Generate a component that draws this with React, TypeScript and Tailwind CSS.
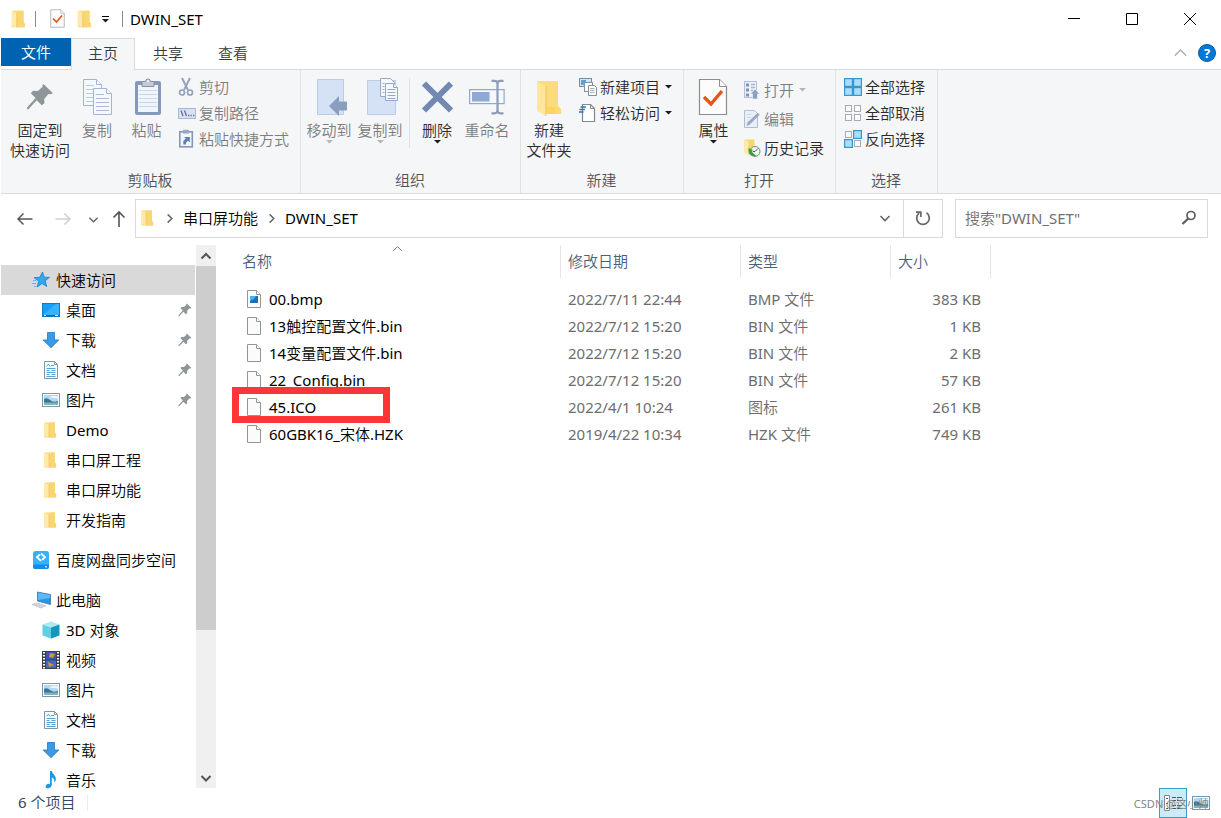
import React from "react";

type IconProps = { className?: string };

const FolderIcon = ({ className = "h-4 w-4" }: IconProps) => (
  <svg className={className} viewBox="0 0 16 16">
    <path d="M2.500.6h10.400v10.200l1.200 1.200v3.400H2.500z" fill="#fbd870" />
    <path d="M8 .6h4.900v10.200l1.200 1.200v3.400H8z" fill="#fad673" />
    <path d="M2.500.6 7 2.600v13L2.500 14z" fill="#ffe9ab" />
    <path d="M7 2.800v12.800" stroke="#f0c456" strokeWidth=".8" />
  </svg>
);

const BigFolderIcon = () => (
  <svg className="h-10 w-8" viewBox="0 0 32 40">
    <path d="M4 3h21v26l3 3v4H13L4 32z" fill="#fcd462" />
    <path d="M4 3h21v26H14V9z" fill="#fbdc7c" />
    <path d="M4 3l9 5v30l-9-5z" fill="#ffe69c" />
    <path d="M13 8v30" stroke="#f3c65a" />
    <path d="M22 36v-6l3-2 3 3v5z" fill="#fdd976" />
  </svg>
);

const CheckDoc = ({ className = "h-10 w-8" }: IconProps) => (
  <svg className={className} viewBox="0 0 32 40" fill="none">
    <path d="M1.500 1.500h20l7 7v28h-27z" fill="#fcfcfd" stroke="#8d8d8d" strokeWidth="1.200" />
    <path d="M21.500 1.500v7h7" fill="#fff" stroke="#8d8d8d" />
    <path d="M6 19l7 7 11-13" stroke="#e2571a" strokeWidth="3.400" />
  </svg>
);

const PinIcon = ({ className = "h-4 w-4" }: IconProps) => (
  <svg className={className} viewBox="0 0 28 28" fill="#8e9699">
    <path d="M17.500 1 27 10.200l-2.600 1-1.900-.3-4.300 5 .3 4.400-2.800 2-5-5L2.200 26.400.8 26l.5-1.800L9.600 15 4.800 10.200l2.300-2.400 4.700.2 4.800-4.200-.1-1.600z" />
  </svg>
);

const page = "#f5f8fd";
const CopyIcon = () => (
  <svg className="h-10 w-8" viewBox="0 0 32 40" fill={page} stroke="#a2b4d2">
    <path d="M2.500 1.500h13l5 5v21h-18z" />
    <path d="M15.500 1.500v5h5" />
    <path d="M5 7.500h8M5 11.500h11M5 15.500h7M5 19.500h7M5 23.500h7" stroke="#bccae0" />
    <path d="M12.500 10.500h13l5 5v21h-18z" />
    <path d="M25.500 10.500v5h5" />
    <path d="M15 16.500h8M15 20.500h13M15 24.500h13M15 28.500h13M15 32.500h13" stroke="#a9bad6" />
  </svg>
);

const PasteIcon = () => (
  <svg className="h-10 w-8" viewBox="0 0 32 40">
    <rect x="4" y="3" width="26" height="34" rx="2" fill="#8498ba" />
    <rect x="7" y="7" width="20" height="27" fill="#f0f4fb" />
    <path d="M8 12.500h18M8 16.500h18M8 20.500h18M8 24.500h18M8 28.500h18" stroke="#c9d6ea" />
    <path d="M11 3.500h3.500a2.500 2.500 0 0 1 5 0H23v5H11z" fill="#c3cbd8" stroke="#8791a3" />
    <circle cx="17" cy="3.300" r="1" fill="#fff" />
  </svg>
);

const ScissorsIcon = () => (
  <svg className="h-5 w-[18px]" viewBox="0 0 18 20" fill="none" stroke="#93a2bb">
    <path d="M4 1l6 12M12 1L6 13" strokeWidth="1.900" />
    <circle cx="4" cy="15.500" r="2.500" strokeWidth="1.700" />
    <circle cx="12" cy="15.500" r="2.500" strokeWidth="1.700" />
  </svg>
);

const CopyPathIcon = () => (
  <svg className="h-5 w-[18px]" viewBox="0 0 18 20" fill="none">
    <rect x=".5" y="5.500" width="17" height="10" fill="#d8e2f2" stroke="#a9b9d3" />
    <path d="M3 7.500l2 5.500M6.500 7.500l2 5.500" stroke="#5e7294" strokeWidth="1.300" />
    <path d="M10 12.500h1.300M12.500 12.500h1.300M15 12.500h1.300" stroke="#5e7294" strokeWidth="1.300" />
  </svg>
);

const PasteShortcutIcon = () => (
  <svg className="h-5 w-[18px]" viewBox="0 0 18 20" fill="none">
    <rect x="1.800" y="2.800" width="12.500" height="15" fill="#f3f6fb" stroke="#8497b8" strokeWidth="1.600" />
    <path d="M5 .8h6v3.800H5z" fill="#9aa9c2" />
    <path d="M5.300 15.500V12l2.500-2.500L6 8h5.800v5.500L10 11.800l-2 2v1.700z" fill="#5c80b8" />
  </svg>
);

const MoveToIcon = () => (
  <svg className="h-10 w-9" viewBox="0 0 36 40">
    <path d="M6.500 1.500h26v35h-26z" fill="#d5e2f5" stroke="#b9cce8" />
    <path d="M18 28l10-10v5.500h8v9h-8V38z" fill="#8a9fbe" />
  </svg>
);

const CopyToIcon = () => (
  <svg className="h-10 w-9" viewBox="0 0 36 40" fill={page}>
    <path d="M5.500 2.500h28v34h-28z" fill="#d5e2f5" stroke="#bacce8" />
    <g stroke="#94a8c8">
      <path d="M18.500.5h10l4 4v14h-14z" />
      <path d="M23.500 5.500h8l4 4v13h-12z" />
      <path d="M31.500 5.500v4h4M20.500 5.500h2M20.500 8.500h2M20.500 11.500h2M20.500 14.500h2M25.500 11.500h8M25.500 14.500h8M25.500 17.500h8M25.500 20.500h8" />
    </g>
  </svg>
);

const DeleteIcon = () => (
  <svg className="h-10 w-8" viewBox="0 0 32 40">
    <path d="M3 5.500l27 27M30 5.500l-27 27" stroke="#7288b0" strokeWidth="6" />
  </svg>
);

const RenameIcon = () => (
  <svg className="h-10 w-9" viewBox="0 0 36 40" fill="none">
    <rect x=".6" y="11.600" width="34.500" height="14" fill="#f4f7fc" stroke="#94a7c8" strokeWidth="1.200" />
    <rect x="3" y="14" width="17.500" height="9.500" fill="#90a9d2" />
    <path d="M22.500 2.800h3q3 0 3 3v26.500q0 3-3 3h-3M34.500 2.800h-3q-3 0-3 3v26.500q0 3 3 3h3" stroke="#8d9cb7" strokeWidth="2.200" />
  </svg>
);

const NewItemIcon = () => (
  <svg className="h-5 w-[18px]" viewBox="0 0 18 20" fill="#fff" stroke="#82909b">
    <rect x=".5" y="1.500" width="12" height="8" fill="#cfe6f7" stroke="#6d91ab" />
    <path d="M2 3h5v5H2z" fill="#5ba3d8" stroke="none" />
    <rect x="5.500" y="5.500" width="8" height="9" />
    <path d="M9.500 8.500h6l2 2v8h-8z" />
    <path d="M11 11.500h4.500M11 13.500h4.500M11 15.500h4.500" stroke="#a5adb5" />
  </svg>
);

const EasyAccessIcon = () => (
  <svg className="h-5 w-[18px]" viewBox="0 0 18 20" fill="none">
    <path d="M3.500 1.500h8l4 4v13h-12z" fill="#fff" stroke="#7f8991" strokeWidth="1.200" />
    <path d="M11.500 1.500v4h4" stroke="#7f8991" />
    <path d="M1.500 4h5.500M.5 6.500h5.500M0 9h4.500" stroke="#2878bd" strokeWidth="1.400" />
  </svg>
);

const OpenIcon = () => (
  <svg className="h-5 w-[18px]" viewBox="0 0 18 20" fill="none">
    <rect x="1.500" y="1.500" width="12" height="16" fill="#edf1f8" stroke="#b2bfd4" />
    <path d="M3 3.500h3v3H3zM3 8.500h3v3H3zM3 13.500h3v3H3z" fill="#7c94bb" />
    <path d="M8 4.500h4M8 7.500h4M8 10.500h2" stroke="#a7b7d1" strokeWidth="1.500" />
    <path d="M12 9l4.500 5h-2v5h-5v-5h-2z" fill="#8b9fbe" stroke="#f5f6f7" strokeWidth=".6" />
  </svg>
);

const EditIcon = () => (
  <svg className="h-5 w-[18px]" viewBox="0 0 18 20" fill="none">
    <path d="M1.500 1.500h10l3 3v14h-13z" fill="#e9eff8" stroke="#b1bfd5" />
    <path d="M3.500 17l1-3.500L14.800 3.700l1.900 2L6.500 15.800z" fill="#97a9c6" />
    <path d="M4 8.500h4M4 5.500h4" stroke="#cdd7e6" />
  </svg>
);

const HistoryIcon = () => (
  <svg className="h-5 w-[18px]" viewBox="0 0 18 20" fill="none">
    <path d="M1.500 1.500h10v13l-6 2.500-4-3z" fill="#f9d56d" />
    <path d="M1.500 1.500l4 2v14l-4-3z" fill="#ffeaa8" />
    <circle cx="12" cy="13.500" r="5" fill="#eef4ee" stroke="#7d8b86" />
    <path d="M12 13.500l3-3M12 13.500h-2" stroke="#47534e" />
    <path d="M5.500 10l4.500 2-1 1c.5 2 1.800 3.300 4.300 4.500-4 1.500-7.500-.5-7.800-4z" fill="#3f9d45" />
  </svg>
);

const SelectIcon = ({ on }: { on: boolean[] }) => (
  <svg className="h-5 w-[18px]" viewBox="0 0 18 20">
    {[[0, 1], [9, 1], [0, 10], [9, 10]].map(([x, y], i) =>
      on[i] ? (
        <rect key={i} x={x + 0.6} y={y + 0.6} width="7.800" height="7.800" fill="#a9ddfb" stroke="#3796cb" strokeWidth="1.200" />
      ) : (
        <rect key={i} x={x + 1.5} y={y + 1.5} width="6" height="6" fill="#fafbfc" stroke="#a7abb0" />
      )
    )}
  </svg>
);

const StarIcon = () => (
  <svg className="h-[18px] w-[18px]" viewBox="0 0 18 18">
    <path d="M10.500 1l1.700 5.200 5.300.2-4.300 3.300 1.500 5.800-4.600-3-5 3.500 1.600-5.700L2 6.600l5.700-.3z" fill="#35a6f2" stroke="#1f7fca" strokeWidth=".8" />
    <path d="M1 9.500h3M0 12.500h4M2 15.500h2" stroke="#65b6ea" />
  </svg>
);

const DesktopIcon = () => (
  <svg className="h-[18px] w-[18px]" viewBox="0 0 18 18">
    <rect x=".5" y="2.500" width="17" height="13" fill="#12a0fb" stroke="#1279c3" />
    <path d="M1 14L14 3h3v11z" fill="#37b2ff" />
    <path d="M1 14.500h16" stroke="#0b66a8" />
    <path d="M2 14.500h2M13 14.500h3" stroke="#d7efff" />
  </svg>
);

const DownloadIcon = () => (
  <svg className="h-[18px] w-[18px]" viewBox="0 0 18 18">
    <path d="M5.500 1.500h7v7.500h4.300L9 16.700 1.200 9h4.300z" fill="#3d98e6" stroke="#1e77c5" strokeWidth=".8" />
  </svg>
);

const DocumentIcon = () => (
  <svg className="h-[18px] w-[18px]" viewBox="0 0 18 18" fill="none">
    <path d="M2.500.5h10l3 3v14h-13z" fill="#f8fbfd" stroke="#7f95a3" />
    <path d="M12.500.5v3h3" stroke="#7f95a3" />
    <path d="M4.500 5.500L6.500 3l1.500 2.500M9 4.500h3M4.500 7.500h9M4.500 9.500h3M9.500 9.500h4M4.500 11.500h9M4.500 13.500h3M9.500 13.500h4M4.500 15.500h9" stroke="#3f9bd0" strokeWidth=".9" />
  </svg>
);

const PictureIcon = () => (
  <svg className="h-[18px] w-[18px]" viewBox="0 0 18 18">
    <rect x=".5" y="2.500" width="17" height="13" fill="#fff" stroke="#8494a0" />
    <rect x="2" y="4" width="14" height="10" fill="#aed9f4" />
    <path d="M2 8q3-2 6 1t8 1v2H2z" fill="#42729a" />
    <path d="M2 11.500h14V14H2z" fill="#7fb3bd" />
    <path d="M7 6.500q4-3 9-1v2z" fill="#edf7fd" />
  </svg>
);

const BaiduIcon = () => (
  <svg className="h-5 w-[18px]" viewBox="0 0 18 20" fill="none">
    <rect x="1" y="1" width="16" height="18" rx="2.500" fill="#36b2fa" />
    <path d="M1 14.500h16v2a2.500 2.500 0 0 1-2.500 2.500h-11A2.500 2.500 0 0 1 1 16.500z" fill="#158ae8" />
    <path d="M9 3.500l4 3.700-4 3.700-4-3.700z" stroke="#fff" strokeWidth="1.800" strokeDasharray="9.400 1.500" />
    <path d="M13 16.800h2" stroke="#fff" />
  </svg>
);

const ComputerIcon = () => (
  <svg className="h-[18px] w-5" viewBox="0 0 20 18">
    <path d="M5.500 1l13 2.500v10L5.500 10z" fill="#2496e8" stroke="#4a6f8e" strokeWidth=".8" />
    <path d="M6 1.500l12 2.400v3L6 9z" fill="#5bb9f7" />
    <path d="M0 13.500l5-1.500 9 2.800-5 2.200z" fill="#d0d6e2" stroke="#aeb6c5" strokeWidth=".6" />
  </svg>
);

const CubeIcon = () => (
  <svg className="h-[18px] w-[18px]" viewBox="0 0 18 18">
    <path d="M9 .5L17.500 3.500 9 6.500.5 3.500z" fill="#aee9f3" />
    <path d="M.5 3.500L9 6.500v11L.5 14.500z" fill="#5fd0e2" />
    <path d="M17.500 3.500L9 6.500v11l8.500-3z" fill="#1497bd" />
  </svg>
);

const VideoIcon = () => (
  <svg className="h-[18px] w-[18px]" viewBox="0 0 18 18">
    <path d="M0 0h18v18H0z" fill="#3a3d45" />
    <path d="M4 1h10v7.500H4z" fill="#3759b5" />
    <path d="M4 9.500h10V17H4z" fill="#4168c7" />
    <path d="M8 2l5 1-2 4-4-1zM6 11l6 3-5 2z" fill="#c69a45" />
    <path d="M2 1v17M16 1v17" stroke="#fff" strokeWidth="2" strokeDasharray="1.600 1.400" />
  </svg>
);

const MusicIcon = () => (
  <svg className="h-[18px] w-[18px]" viewBox="0 0 18 18">
    <path d="M8 0h1.800c.5 3 4.700 4.500 4 9-.4 1.400-1 2-1.500 2.400.6-3-1-4.500-2.500-5v7.400C9.500 16.500 7 17.800 5 17.300c-2-.6-1.800-3.300.5-4.200 1-.4 2-.3 2.500 0z" fill="#1f97e3" />
  </svg>
);

const FileIcon = ({ picture = false }: { picture?: boolean }) => (
  <svg className="h-[18px] w-[14px] shrink-0" viewBox="0 0 14 18" fill="none">
    <path d="M.5.5h9l4 4v13H.5z" fill="#fafbfb" stroke="#959595" />
    <path d="M9.500.5v4h4" fill="#fff" stroke="#959595" />
    {picture && <path d="M3 6h8v7H3z" fill="#1d6fb6" />}
    {picture && <path d="M3 6h6l-2 3-4 2z" fill="#4db0ea" />}
  </svg>
);

const Chevron = ({ d, color = "#666", size = "h-3 w-3", weight = 1.6 }: { d: "up" | "down" | "right"; color?: string; size?: string; weight?: number }) => (
  <svg className={size} viewBox="0 0 12 12" fill="none" stroke={color} strokeWidth={weight}>
    <path d={d === "up" ? "M1.500 8.500L6 4l4.500 4.500" : d === "down" ? "M1.500 4L6 8.500 10.500 4" : "M4 1.500L8.500 6 4 10.500"} />
  </svg>
);

const Caret = ({ color = "#1b1b1b" }: { color?: string }) => (
  <svg className="h-1 w-[7px]" viewBox="0 0 7 4">
    <path d="M0 0h7L3.500 3.500z" fill={color} />
  </svg>
);

function BigButton({ icon, lines, width, disabled, caret }: { icon: React.ReactNode; lines: string[]; width: string; disabled?: boolean; caret?: boolean }) {
  return (
    <button disabled={disabled} className={`flex flex-col items-center self-start leading-5 ${width} ${disabled ? "text-[#7b7d80]" : "text-[#2b2b2b]"}`}>
      <span className="flex h-[42px] items-start justify-center">{icon}</span>
      {lines.map((l) => (
        <span key={l} className="whitespace-nowrap">{l}</span>
      ))}
      {caret && <Caret color={disabled ? "#b5b5b5" : "#1b1b1b"} />}
    </button>
  );
}

function SmallButton({ icon, label, disabled, caret, height = "h-[26px]" }: { icon: React.ReactNode; label: string; disabled?: boolean; caret?: boolean; height?: string }) {
  return (
    <button disabled={disabled} className={`flex items-center whitespace-nowrap ${height} ${disabled ? "text-[#7b7d80]" : "text-[#2b2b2b]"}`}>
      <span className="mr-[3px]">{icon}</span>
      {label}
      {caret && <span className="ml-[5px]"><Caret color={disabled ? "#b5b5b5" : "#1b1b1b"} /></span>}
    </button>
  );
}

function Group({ label, width, children }: { label: string; width: string; children: React.ReactNode }) {
  return (
    <section aria-label={label} className={`flex shrink-0 flex-col border-r border-[#e2e3e4] ${width}`}>
      <div className="flex flex-1 pt-2">{children}</div>
      <div className="h-6 pr-px text-center leading-[22px] text-[#505356]">{label}</div>
    </section>
  );
}

const quick = [
  { label: "桌面", icon: <DesktopIcon />, pinned: true },
  { label: "下载", icon: <DownloadIcon />, pinned: true },
  { label: "文档", icon: <DocumentIcon />, pinned: true },
  { label: "图片", icon: <PictureIcon />, pinned: true },
  { label: "Demo", icon: <FolderIcon /> },
  { label: "串口屏工程", icon: <FolderIcon /> },
  { label: "串口屏功能", icon: <FolderIcon /> },
  { label: "开发指南", icon: <FolderIcon /> },
];

const computer = [
  { label: "3D 对象", icon: <CubeIcon /> },
  { label: "视频", icon: <VideoIcon /> },
  { label: "图片", icon: <PictureIcon /> },
  { label: "文档", icon: <DocumentIcon /> },
  { label: "下载", icon: <DownloadIcon /> },
  { label: "音乐", icon: <MusicIcon /> },
];

const files = [
  { name: "00.bmp", date: "2022/7/11 22:44", type: "BMP 文件", size: "383 KB", picture: true },
  { name: "13触控配置文件.bin", date: "2022/7/12 15:20", type: "BIN 文件", size: "1 KB" },
  { name: "14变量配置文件.bin", date: "2022/7/12 15:20", type: "BIN 文件", size: "2 KB" },
  { name: "22_Config.bin", date: "2022/7/12 15:20", type: "BIN 文件", size: "57 KB" },
  { name: "45.ICO", date: "2022/4/1 10:24", type: "图标", size: "261 KB", marked: true },
  { name: "60GBK16_宋体.HZK", date: "2019/4/22 10:34", type: "HZK 文件", size: "749 KB" },
];

function TreeRow({ icon, label, root, selected, pinned }: { icon: React.ReactNode; label: string; root?: boolean; selected?: boolean; pinned?: boolean }) {
  return (
    <li>
      <a href="#" className={`flex h-[30px] items-center pr-[3px] text-black ${root ? "pl-[31px]" : "pl-[41px]"} ${selected ? "bg-[#d9d9d9]" : ""}`}>
        <span className={`flex ${root ? "mr-1 w-5" : "mr-[6px] w-[18px]"}`}>{icon}</span>
        <span className="flex-1 whitespace-nowrap">{label}</span>
        {pinned && <PinIcon className="h-[14px] w-[14px]" />}
      </a>
    </li>
  );
}

export default function App() {
  return (
    <div className="flex h-screen flex-col overflow-hidden bg-white pl-px font-['Noto_Sans','Noto_Sans_CJK_SC_DemiLight','Noto_Sans_CJK_SC',sans-serif] text-[15px] leading-5 text-black">
      <header className="flex h-[38px] shrink-0 items-center">
        <div className="flex flex-1 items-center pl-2">
          <FolderIcon className="h-[18px] w-[18px]" />
          <span className="ml-2 h-4 w-px bg-[#8c8c8c]" />
          <button aria-label="属性" className="ml-[14px]"><CheckDoc className="h-5 w-4" /></button>
          <button aria-label="新建文件夹" className="ml-[9px]"><FolderIcon className="h-[18px] w-[18px]" /></button>
          <button aria-label="自定义快速访问工具栏" className="ml-[9px] flex flex-col items-center gap-0.5">
            <span className="h-px w-[7px] bg-black" />
            <Caret />
          </button>
          <span className="ml-[13px] h-4 w-px bg-[#8c8c8c]" />
          <h1 className="ml-[7px]">DWIN_SET</h1>
        </div>
        <div className="flex items-center gap-[46px] pr-[25px]">
          <button aria-label="最小化"><svg className="h-3 w-3" viewBox="0 0 12 12"><path d="M0 5.500h12" stroke="#000" /></svg></button>
          <button aria-label="最大化"><svg className="h-3 w-3" viewBox="0 0 12 12"><path d="M.5.5h11v11H.5z" fill="none" stroke="#000" /></svg></button>
          <button aria-label="关闭"><svg className="h-3 w-3" viewBox="0 0 12 12"><path d="M0 0l12 12M12 0L0 12" stroke="#000" /></svg></button>
        </div>
      </header>

      <nav className="flex h-8 shrink-0 border-b border-[#dadbdc] text-[#3b3b3b]">
        <button className="h-7 w-[70px] bg-[#0063b1] text-white">文件</button>
        <button className="z-10 -mb-px w-16 border border-b-0 border-[#dadbdc] bg-[#f5f6f7] pb-1">主页</button>
        <button className="w-[66px] pb-0.5">共享</button>
        <button className="w-16 pb-0.5">查看</button>
        <div className="flex flex-1 items-center justify-end gap-[10px] pr-[5px] pb-0.5">
          <button aria-label="折叠功能区"><Chevron d="up" color="#b2b2b2" size="h-[15px] w-[15px]" weight={1.2} /></button>
          <button className="h-[18px] w-[18px] rounded-full border border-[#005ba8] bg-[#0078d7] text-[13px] leading-4 font-bold text-white">?</button>
        </div>
      </nav>

      <div className="flex h-[124px] shrink-0 border-b border-[#dadbdc] bg-[#f5f6f7]">
        <Group label="剪贴板" width="w-[300px]">
          <BigButton icon={<span className="pt-[5px]"><PinIcon className="h-7 w-7" /></span>} lines={["固定到", "快速访问"]} width="w-[78px]" />
          <BigButton icon={<CopyIcon />} lines={["复制"]} width="w-9" disabled />
          <BigButton icon={<PasteIcon />} lines={["粘贴"]} width="w-[63px]" disabled />
          <div className="-mt-1">
            <SmallButton icon={<ScissorsIcon />} label="剪切" disabled />
            <SmallButton icon={<CopyPathIcon />} label="复制路径" disabled />
            <SmallButton icon={<PasteShortcutIcon />} label="粘贴快捷方式" disabled />
          </div>
        </Group>
        <Group label="组织" width="w-[220px]">
          <BigButton icon={<MoveToIcon />} lines={["移动到"]} width="w-14" disabled caret />
          <BigButton icon={<CopyToIcon />} lines={["复制到"]} width="w-[46px]" disabled caret />
          <span className="ml-[6px] h-[70px] w-px bg-[#e2e3e4]" />
          <BigButton icon={<DeleteIcon />} lines={["删除"]} width="w-[54px]" caret />
          <BigButton icon={<RenameIcon />} lines={["重命名"]} width="w-[46px]" disabled />
        </Group>
        <Group label="新建" width="w-[163px]">
          <BigButton icon={<BigFolderIcon />} lines={["新建", "文件夹"]} width="w-14" />
          <div className="-mt-1 pl-0.5">
            <SmallButton icon={<NewItemIcon />} label="新建项目" caret />
            <SmallButton icon={<EasyAccessIcon />} label="轻松访问" caret />
          </div>
        </Group>
        <Group label="打开" width="w-[152px]">
          <BigButton icon={<CheckDoc />} lines={["属性"]} width="w-[59px]" caret />
          <div className="-mt-[3px]">
            <SmallButton height="h-[29px]" icon={<OpenIcon />} label="打开" disabled caret />
            <SmallButton height="h-[29px]" icon={<EditIcon />} label="编辑" disabled />
            <SmallButton height="h-[29px]" icon={<HistoryIcon />} label="历史记录" />
          </div>
        </Group>
        <Group label="选择" width="w-[102px]">
          <div className="-mt-1 pl-2">
            <SmallButton icon={<SelectIcon on={[true, true, true, true]} />} label="全部选择" />
            <SmallButton icon={<SelectIcon on={[false, false, false, false]} />} label="全部取消" />
            <SmallButton icon={<SelectIcon on={[false, true, true, false]} />} label="反向选择" />
          </div>
        </Group>
      </div>

      <div className="flex h-[51px] shrink-0 items-center pr-[13px] pb-[3px]">
        <div className="flex w-[134px] items-center pt-0.5 pl-4">
          <button aria-label="后退"><svg className="h-4 w-4" viewBox="0 0 16 16" fill="none" stroke="#555" strokeWidth="1.500"><path d="M15.500 8H1M6.500 2.500L1 8l5.500 5.500" /></svg></button>
          <button aria-label="前进" disabled className="ml-[22px]"><svg className="h-4 w-4" viewBox="0 0 16 16" fill="none" stroke="#cfcfcf" strokeWidth="1.500"><path d="M.5 8H15M9.500 2.500L15 8l-5.500 5.500" /></svg></button>
          <button aria-label="最近位置" className="ml-[17px]"><Chevron d="down" size="h-[11px] w-[11px]" /></button>
          <button aria-label="上移" className="ml-3"><svg className="h-[18px] w-4" viewBox="0 0 16 18" fill="none" stroke="#555" strokeWidth="1.600"><path d="M8 17V2M2.500 7.500L8 2l5.500 5.500" /></svg></button>
        </div>
        <div className="flex h-[39px] flex-1 items-center border border-[#d9d9d9] pl-[3px]">
          <FolderIcon />
          <span className="ml-[9px]"><Chevron d="right" size="h-[11px] w-[11px]" /></span>
          <button className="ml-2">串口屏功能</button>
          <span className="ml-2"><Chevron d="right" size="h-[11px] w-[11px]" /></span>
          <button className="ml-2">DWIN_SET</button>
          <button aria-label="展开地址" className="mr-3 ml-auto"><Chevron d="down" /></button>
          <button aria-label="刷新" className="flex h-full w-[39px] items-center justify-center border-l border-[#d9d9d9]">
            <svg className="h-4 w-4" viewBox="0 0 16 16" fill="none" stroke="#666" strokeWidth="1.700"><path d="M11.500 2.800A6.300 6.300 0 1 1 4 3.200" /><path d="M1 2.200h4.800V7" /></svg>
          </button>
        </div>
        <div className="ml-3 flex h-[39px] w-[253px] items-center border border-[#d9d9d9] pr-[10px] pl-[9px]">
          <input aria-label="搜索" placeholder={'搜索"DWIN_SET"'} className="min-w-0 flex-1 outline-none placeholder:text-[#707070]" />
          <svg className="h-4 w-4" viewBox="0 0 16 16" fill="none" stroke="#5c5c5c"><circle cx="10" cy="5.500" r="4" strokeWidth="1.700" /><path d="M7.200 8.500L1.500 14" strokeWidth="2.200" /></svg>
        </div>
      </div>

      <main className="flex min-h-0 flex-1">
        <nav aria-label="导航窗格" className="-mb-2 w-[194px] shrink-0 overflow-hidden pt-5">
          <ul>
            <TreeRow root selected icon={<StarIcon />} label="快速访问" />
            {quick.map((q) => <TreeRow key={q.label} {...q} />)}
          </ul>
          <ul className="mt-[10px]"><TreeRow root icon={<BaiduIcon />} label="百度网盘同步空间" /></ul>
          <ul className="mt-[10px]">
            <TreeRow root icon={<ComputerIcon />} label="此电脑" />
            {computer.map((c) => <TreeRow key={c.label} {...c} />)}
          </ul>
        </nav>
        <div className="ml-px flex w-5 shrink-0 flex-col bg-[#f0f0f0]">
          <button aria-label="向上滚动" className="flex h-[21px] items-center justify-center"><Chevron d="up" weight={2} color="#555" /></button>
          <div className="h-[67%] bg-[#cdcdcd]" />
          <button aria-label="向下滚动" className="mt-auto flex h-[21px] items-center justify-center"><Chevron d="down" weight={2} color="#555" /></button>
        </div>
        <div className="flex-1">
          <table className="w-full table-fixed border-collapse text-left text-[#6d6d6d]">
            <colgroup>
              <col className="w-[345px]" /><col className="w-[180px]" /><col className="w-[150px]" /><col className="w-[100px]" /><col />
            </colgroup>
            <thead>
              <tr className="h-10 align-top text-[#4c607a]">
                <th className="p-0 font-normal"><div className="relative h-[33px] border-r border-[#e5e5e5] pl-[26px] leading-[33px]">名称<span className="absolute -top-0.5 left-44"><Chevron d="up" size="h-[11px] w-[11px]" weight={1} /></span></div></th>
                <th className="p-0 font-normal"><div className="h-[33px] border-r border-[#e5e5e5] pl-[7px] leading-[33px]">修改日期</div></th>
                <th className="p-0 font-normal"><div className="h-[33px] border-r border-[#e5e5e5] pl-[7px] leading-[33px]">类型</div></th>
                <th className="p-0 font-normal"><div className="h-[33px] border-r border-[#e5e5e5] pl-[7px] leading-[33px]">大小</div></th>
                <th className="p-0" />
              </tr>
            </thead>
            <tbody>
              {files.map((f) => (
                <tr key={f.name} className="h-[27px]">
                  <td className="relative p-0 pl-[31px] text-black">
                    <span className="flex items-center gap-2"><FileIcon picture={f.picture} />{f.name}</span>
                    {f.marked && <span className="absolute -top-[6px] left-4 z-10 h-9 w-[158px] border-[7px] border-[#fc3536]" />}
                  </td>
                  <td className="p-0 pl-[7px]">{f.date}</td>
                  <td className="p-0 pl-[7px]">{f.type}</td>
                  <td className="p-0 pr-[10px] text-right">{f.size}</td>
                  <td className="p-0" />
                </tr>
              ))}
            </tbody>
          </table>
        </div>
      </main>

      <footer className="relative flex h-[30px] shrink-0 items-center pr-[11px] pl-[17px] text-[#33475f]">
        <span className="pb-0.5">6 个项目</span>
        <span className="ml-3 h-4 w-px bg-[#ececec]" />
        <button aria-label="详细信息" className="ml-auto flex h-[30px] w-7 items-center justify-center border border-[#3c9cc9] bg-[#cbebf9]">
          <svg className="h-[18px] w-[18px]" viewBox="0 0 18 18" fill="none" stroke="#555">
            <path d="M.5 1.500h5v15h-5z" fill="#fff" stroke="#888" />
            <path d="M2 4.500h2M2 9.500h2M2 14.500h2M8 3.500h4M13 3.500h5M8 6.500h4M13 6.500h5M8 11.500h4M13 11.500h5M8 14.500h4M13 14.500h5" />
          </svg>
        </button>
        <button aria-label="大图标" className="ml-[5px]"><PictureIcon /></button>
        <span className="pointer-events-none absolute right-3 bottom-1 text-[11px] text-[#858585]">CSDN @这小帅</span>
      </footer>
    </div>
  );
}
